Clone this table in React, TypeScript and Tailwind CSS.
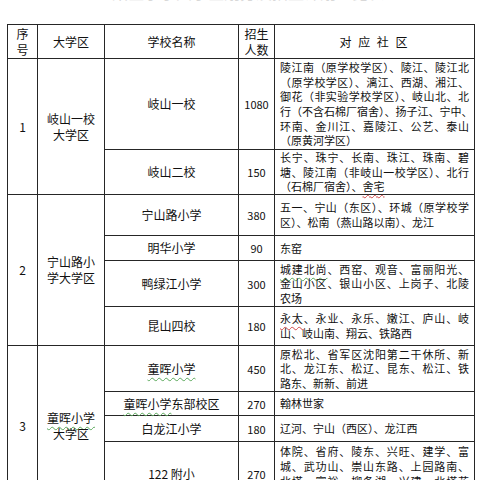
import React from 'react';

type Part = string | { t: string; wave: 'g' | 'r' };

type SchoolRow = {
  name: Part[];
  count: string;
  lines: Part[][];
  h: string;
};

type District = {
  no: string;
  name: Part[][];
  schools: SchoolRow[];
};

const g = (t: string): Part => ({ t, wave: 'g' });
const r = (t: string): Part => ({ t, wave: 'r' });

const districts: District[] = [
  {
    no: '1',
    name: [['岐山一校'], ['大学区']],
    schools: [
      {
        name: ['岐山一校'],
        count: '1080',
        h: 'h-[91px]',
        lines: [
          ['陵江南（原学校学区）、陵江、陵江北'],
          ['（原学校学区）、漓江、西湖、湘江、'],
          ['御花（非实验学校学区）、岐山北、北'],
          ['行（不含石棉厂宿舍）、扬子江、宁中、'],
          ['环南、金川江、嘉陵江、公艺、泰山'],
          ['（原黄河学区）'],
        ],
      },
      {
        name: ['岐山二校'],
        count: '150',
        h: 'h-[44px]',
        lines: [
          ['长宁、珠宁、长南、珠江、珠南、碧'],
          ['塘、陵江南（非岐山一校学区）、北行'],
          ['（石棉厂宿舍）、', r('舍宅')],
        ],
      },
    ],
  },
  {
    no: '2',
    name: [['宁山路小'], ['学大学区']],
    schools: [
      {
        name: ['宁山路小学'],
        count: '380',
        h: 'h-[41px]',
        lines: [['五一、宁山（东区）、环城（原学校学'], ['区）、松南（燕山路以南）、龙江']],
      },
      { name: ['明华小学'], count: '90', h: 'h-[25px]', lines: [['东窑']] },
      {
        name: ['鸭绿江小学'],
        count: '300',
        h: 'h-[46px]',
        lines: [
          [g('城建北尚'), '、西窑、观音、富丽阳光、'],
          ['金山小区、银山小区、上岗子、北陵'],
          ['农场'],
        ],
      },
      {
        name: ['昆山四校'],
        count: '180',
        h: 'h-[39px]',
        lines: [[r('永太'), '、永业、永乐、嫩江、庐山、岐'], ['山、岐山南、翔云、铁路西']],
      },
    ],
  },
  {
    no: '3',
    name: [[g('童晖小学')], ['大学区']],
    schools: [
      {
        name: [g('童晖小学')],
        count: '450',
        h: 'h-[46px]',
        lines: [
          ['原松北、省军区沈阳第二干休所、新'],
          ['北、龙江东、松辽、昆东、松江、铁'],
          ['路东、新新、前进'],
        ],
      },
      { name: [g('童晖小学'), '东部校区'], count: '270', h: 'h-[24px]', lines: [['翰林世家']] },
      { name: ['白龙江小学'], count: '180', h: 'h-[26px]', lines: [['辽河、宁山（西区）、龙江西']] },
      {
        name: ['122 附小'],
        count: '270',
        h: 'h-[64px]',
        lines: [
          ['体院、省府、陵东、兴旺、建学、富'],
          ['城、武功山、崇山东路、上园路南、'],
          ['北塔、富裕、柳条湖、兴建、北塔花'],
          ['园'],
        ],
      },
    ],
  },
];

function Text({ parts }: { parts: Part[] }) {
  return (
    <>
      {parts.map((p, i) =>
        typeof p === 'string' ? (
          <span key={i}>{p}</span>
        ) : (
          <span
            key={i}
            className={`underline decoration-wavy decoration-1 underline-offset-[3px] ${
              p.wave === 'g' ? 'decoration-[#5aa85a]' : 'decoration-[#d04848]'
            }`}
          >
            {p.t}
          </span>
        )
      )}
    </>
  );
}

const cell = 'border border-[#262626] p-0 align-middle';

export default function App() {
  return (
    <div
      className="w-[480px] h-[480px] overflow-hidden bg-white text-[#111111]"
      style={{ fontFamily: '"Noto Sans CJK SC", "Noto Sans", sans-serif' }}
    >
      {/* title, mostly above the visible area */}
      <div className="h-[24px] overflow-hidden">
        <div className="-mt-[17px] text-center text-[16px] leading-[18px] text-[#d8d8d8]">
          皇姑区小学大学区划分及招生计划一览表
        </div>
      </div>

      <table className="ml-[7px] w-[467px] table-fixed border-collapse">
        <colgroup>
          <col className="w-[30px]" />
          <col className="w-[67px]" />
          <col className="w-[134px]" />
          <col className="w-[36px]" />
          <col className="w-[200px]" />
        </colgroup>
        <thead>
          <tr className="h-[34px]">
            <th className={`${cell} text-center text-[12px] font-normal leading-[16px]`}>
              序<br />号
            </th>
            <th className={`${cell} text-center text-[12px] font-normal leading-[16px]`}>大学区</th>
            <th className={`${cell} text-center text-[12px] font-normal leading-[16px]`}>学校名称</th>
            <th className={`${cell} text-center text-[12px] font-normal leading-[16px]`}>
              招生<br />人数
            </th>
            <th className={`${cell} text-center text-[12px] font-normal leading-[16px] tracking-[2px]`}>
              对 应 社 区
            </th>
          </tr>
        </thead>
        <tbody>
          {districts.map((d) =>
            d.schools.map((s, si) => (
              <tr key={d.no + si} className={s.h}>
                {si === 0 && (
                  <>
                    <td
                      rowSpan={d.schools.length}
                      className={`${cell} text-center text-[12px] leading-[16px]`}
                    >
                      {d.no}
                    </td>
                    <td
                      rowSpan={d.schools.length}
                      className={`${cell} text-center text-[12px] leading-[16px]`}
                    >
                      {d.name.map((ln, li) => (
                        <div key={li}>
                          <Text parts={ln} />
                        </div>
                      ))}
                    </td>
                  </>
                )}
                <td className={`${cell} text-center text-[12px] leading-[16px]`}>
                  <Text parts={s.name} />
                </td>
                <td className={`${cell} text-center text-[11px] leading-[16px]`}>{s.count}</td>
                <td className={`${cell} px-[5px] text-[11px] leading-[14.7px]`}>
                  {s.lines.map((ln, li) => (
                    <div
                      key={li}
                      className={`whitespace-nowrap ${
                        li < s.lines.length - 1 ? 'text-justify [text-align-last:justify]' : ''
                      }`}
                    >
                      <Text parts={ln} />
                    </div>
                  ))}
                </td>
              </tr>
            ))
          )}
        </tbody>
      </table>
    </div>
  );
}
